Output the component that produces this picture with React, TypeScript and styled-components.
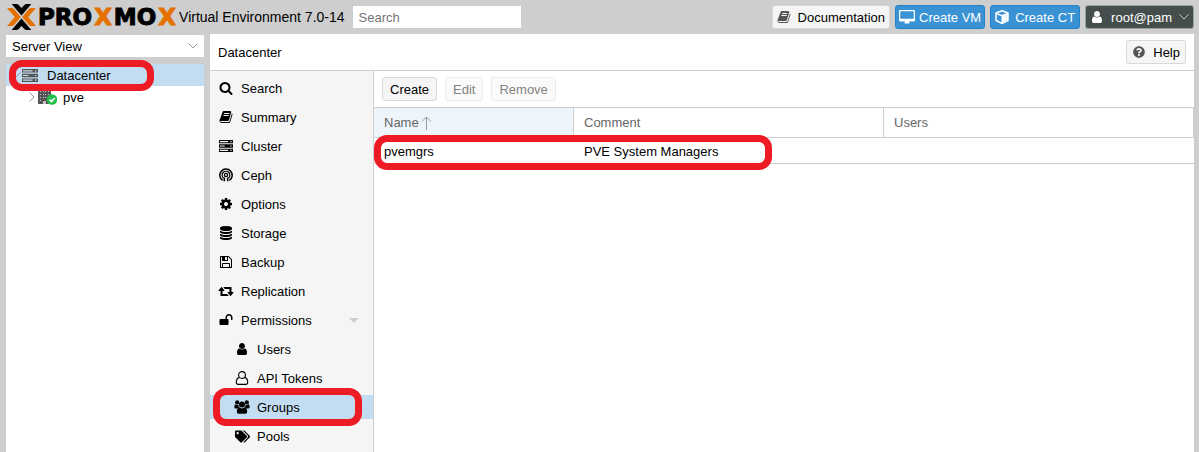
import React from "react";
import styled, { createGlobalStyle, css } from "styled-components";
import { FaTags, FaQuestionCircle } from "react-icons/fa";

const GlobalStyle = createGlobalStyle`
  *, *::before, *::after { box-sizing: border-box; }
  body {
    margin: 0;
    background: #cecece;
    color: #000;
    font: 13px/17px "Liberation Sans", Arial, sans-serif;
  }
  button, input, select { font: inherit; }
`;

const PATHS = {
  search:
    "M1216 832q0-185-131.5-316.5t-316.5-131.5-316.5 131.5-131.5 316.5 131.5 316.5 316.5 131.5 316.5-131.5 131.5-316.5zm512 832q0 52-38 90t-90 38q-54 0-90-38l-343-342q-179 124-399 124-143 0-273.5-55.5t-225-150-150-225-55.5-273.5 55.5-273.5 150-225 225-150 273.5-55.5 273.5 55.5 225 150 150 225 55.5 273.5q0 220-124 399l343 343q37 37 37 90z",
  book: "M1703 478q40 57 18 129l-275 906q-19 64-76.5 107.5t-122.5 43.5h-923q-77 0-148.5-53.5t-99.5-131.5q-24-67-2-127 0-4 3-27t4-37q1-8-3-21.5t-3-19.5q2-11 8-21t16.5-23.5 16.5-23.5q23-38 45-91.5t30-91.5q3-10 .5-30t-.5-28q3-11 17-28t17-23q21-36 42-92t25-90q1-9-2.5-32t.5-28q4-13 22-30.5t22-22.5q19-26 42.5-84.5t27.5-96.5q1-8-3-25.5t-2-26.5q2-8 9-18t18-23 17-21q8-12 16.5-30.5t15-35 16-36 19.5-32 26.5-23.5 36-11.5 47.5 5.5l-1 3q38-9 51-9h761q74 0 114 56t18 130l-274 906q-36 119-71.5 153.5t-128.5 34.5h-869q-27 0-38 15-11 16-1 43 24 70 144 70h923q29 0 56-15.5t35-41.5l300-987q7-22 5-57 38 15 59 43zm-1064 2q-4 13 2 22.5t20 9.5h608q13 0 25.5-9.5t16.5-22.5l21-64q4-13-2-22.5t-20-9.5h-608q-13 0-25.5 9.5t-16.5 22.5zm-83 256q-4 13 2 22.5t20 9.5h608q13 0 25.5-9.5t16.5-22.5l21-64q4-13-2-22.5t-20-9.5h-608q-13 0-25.5 9.5t-16.5 22.5z",
  cog: "M1152 896q0-106-75-181t-181-75-181 75-75 181 75 181 181 75 181-75 75-181zm512-109v222q0 12-8 23t-20 13l-185 28q-19 54-39 91 35 50 107 138 10 12 10 25t-9 23q-27 37-99 108t-94 71q-12 0-26-9l-138-108q-44 23-91 38-16 136-29 186-7 28-36 28h-222q-14 0-24.5-8.5t-11.5-21.5l-28-184q-49-16-90-37l-141 107q-10 9-25 9-14 0-25-11-126-114-165-168-7-10-7-23 0-12 8-23 15-21 51-66.5t54-70.5q-27-50-41-99l-183-27q-13-2-21-12.5t-8-23.5v-222q0-12 8-23t19-13l186-28q14-46 39-92-40-57-107-138-10-12-10-24 0-10 9-23 26-36 98.5-107.5t94.5-71.5q13 0 26 10l138 107q44-23 91-38 16-136 29-186 7-28 36-28h222q14 0 24.5 8.5t11.5 21.5l28 184q49 16 90 37l142-107q9-9 24-9 13 0 25 10 129 119 165 170 7 8 7 22 0 12-8 23-15 21-51 66.5t-54 70.5q26 50 41 98l183 28q13 2 21 12.5t8 23.5z",
  database:
    "M896 768q237 0 443-43t325-127v170q0 69-103 128t-280 93.5-385 34.5-385-34.5-280-93.5-103-128v-170q119 84 325 127t443 43zm0 768q237 0 443-43t325-127v170q0 69-103 128t-280 93.5-385 34.5-385-34.5-280-93.5-103-128v-170q119 84 325 127t443 43zm0-384q237 0 443-43t325-127v170q0 69-103 128t-280 93.5-385 34.5-385-34.5-280-93.5-103-128v-170q119 84 325 127t443 43zm0-1152q208 0 385 34.5t280 93.5 103 128v128q0 69-103 128t-280 93.5-385 34.5-385-34.5-280-93.5-103-128v-128q0-69 103-128t280-93.5 385-34.5z",
  floppy:
    "M512 1536h768v-384h-768v384zm896 0h128v-896q0-14-10-38.5t-20-34.5l-281-281q-10-10-34-20t-39-10v416q0 40-28 68t-68 28h-576q-40 0-68-28t-28-68v-416h-128v1280h128v-416q0-40 28-68t68-28h832q40 0 68 28t28 68v416zm-384-928v-320q0-13-9.5-22.5t-22.5-9.5h-192q-13 0-22.5 9.5t-9.5 22.5v320q0 13 9.5 22.5t22.5 9.5h192q13 0 22.5-9.5t9.5-22.5zm640 32v928q0 40-28 68t-68 28h-1344q-40 0-68-28t-28-68v-1344q0-40 28-68t68-28h928q40 0 88 20t76 48l280 280q28 28 48 76t20 88z",
  retweet:
    "M1280 1504q0 13-9.5 22.5t-22.5 9.5h-960q-8 0-13.5-2t-9-7-5.5-8-3-11.5-1-11.5v-600h-192q-26 0-45-19t-19-45q0-24 15-41l320-384q19-22 49-22t49 22l320 384q15 17 15 41 0 26-19 45t-45 19h-192v384h576q16 0 25 11l160 192q7 10 7 21zm640-416q0 24-15 41l-320 384q-20 23-49 23t-49-23l-320-384q-15-17-15-41 0-26 19-45t45-19h192v-384h-576q-16 0-25-12l-160-192q-7-9-7-20 0-13 9.5-22.5t22.5-9.5h960q8 0 13.5 2t9 7 5.5 8 3 11.5 1 11.5v600h192q26 0 45 19t19 45z",
  unlock:
    "M1728 576v256q0 26-19 45t-45 19h-64q-26 0-45-19t-19-45v-256q0-106-75-181t-181-75-181 75-75 181v192h96q40 0 68 28t28 68v576q0 40-28 68t-68 28h-960q-40 0-68-28t-28-68v-576q0-40 28-68t68-28h672v-192q0-185 131.5-316.5t316.5-131.5 316.5 131.5 131.5 316.5z",
  user: "M1536 1399q0 109-62.5 187t-150.5 78h-854q-88 0-150.5-78t-62.5-187q0-85 8.5-160.5t31.5-152 58.5-131 94-89 134.5-34.5q131 128 313 128t313-128q76 0 134.5 34.5t94 89 58.5 131 31.5 152 8.5 160.5zm-256-887q0 159-112.5 271.5t-271.5 112.5-271.5-112.5-112.5-271.5 112.5-271.5 271.5-112.5 271.5 112.5 112.5 271.5z",
};

const Glyph = ({ name, size = 14, wide }: { name: keyof typeof PATHS; size?: number; wide?: boolean }) => (
  <svg width={wide ? size + 2 : size} height={size} viewBox={wide ? "0 0 1920 1792" : "0 0 1792 1792"} fill="currentColor" aria-hidden="true">
    <path d={PATHS[name]} />
  </svg>
);

const ServerGlyph = ({ width = 14, height = 12 }: { width?: number; height?: number }) => (
  <svg width={width} height={height} viewBox="0 0 16 13" preserveAspectRatio="none" fill="currentColor" aria-hidden="true">
    <path fillRule="evenodd" d="M0 0h16v3.6H0zM1 1.2v1.2h9.500v-1.2zM13 1.2v1.2h1.4V1.2zM0 4.7h16v3.6H0zM1 5.900v1.2h5.500V5.900zM13 5.9v1.2h1.4V5.9zM0 9.4h16V13H0zM1 10.6v1.2h9.500v-1.2zM13 10.6v1.2h1.4v-1.2z" />
  </svg>
);

const CephGlyph = () => (
  <svg width="14" height="14" viewBox="0 0 14 14" fill="none" stroke="currentColor" aria-hidden="true">
    <path d="M3.6 12.4A6.2 6.2 0 1 1 10.4 12.4" strokeWidth="1.500" />
    <path d="M4.600 10.200A3.9 3.9 0 1 1 9.400 10.200" strokeWidth="1.200" />
    <path d="M5.300 13.200V9.500M8.700 13.200V9.500" strokeWidth="1.500" />
    <circle cx="7" cy="7" r="1.600" strokeWidth="1.300" />
  </svg>
);

const UserOutline = () => (
  <svg width="14" height="14" viewBox="0 0 14 14" fill="none" stroke="currentColor" strokeWidth="1.1" aria-hidden="true">
    <circle cx="7" cy="4" r="3.4" />
    <path d="M4.4 6.4C2 7 1.3 9 1.3 11.3c0 1.3.9 2.1 2 2.1h7.4c1.1 0 2-.8 2-2.1C12.700 9 12 7 9.600 6.400" />
  </svg>
);

const UsersGlyph = () => (
  <svg width="16" height="14" viewBox="0 0 16 14" fill="currentColor" aria-hidden="true">
    <circle cx="3.200" cy="2.400" r="2.100" />
    <circle cx="12.800" cy="2.400" r="2.100" />
    <circle cx="8" cy="4.500" r="3" />
    <path d="M1.300 4.300q1.800 1.200 3.200.5 0 1.700 1 2.600-1.500.1-2.300 1.100H1.800Q.300 8.500.300 7.200q0-2.600 1-2.900zM14.700 4.300q-1.800 1.200-3.200.5 0 1.700-1 2.600 1.500.1 2.300 1.100h1.400q1.500 0 1.500-1.300 0-2.600-1-2.900z" />
    <path d="M5.200 7.300q2.800 2.200 5.600 0 2.200.1 2.400 4.400 0 2-1.900 2H4.700q-1.900 0-1.900-2 .2-4.300 2.400-4.400z" />
  </svg>
);

const DesktopGlyph = () => (
  <svg width="16" height="14" viewBox="0 0 16 14" fill="currentColor" aria-hidden="true">
    <path fillRule="evenodd" d="M1.300 0h13.400Q16 0 16 1.300v8.900q0 1.300-1.300 1.300H10q0 .8.600 1.200.1.800-.6.800H6q-.700 0-.6-.8.600-.4.600-1.200H1.300Q0 11.500 0 10.200V1.300Q0 0 1.300 0zM1.300 1.300V8.700H14.700V1.300z" />
  </svg>
);

const CubeGlyph = () => (
  <svg width="14" height="14" viewBox="0 0 14 14" aria-hidden="true">
    <path d="M7 .8 13 3v7.500l-6 3-6-3V3z" fill="none" stroke="currentColor" strokeWidth="1.500" strokeLinejoin="round" />
    <path d="M1 3.300 7 5.700 13 3.300" fill="none" stroke="currentColor" strokeWidth="1.400" />
    <path d="M13.200 3.300 6.500 5.700V13.500L13.200 10.500zM11.800 5.300v4.300L8 11.400V6.700z" fill="currentColor" fillRule="evenodd" />
    <path d="M8 6.700 11.800 5.300V9.600L8 11.400z" fill="currentColor" />
  </svg>
);

const NodeGlyph = () => (
  <svg width="19" height="16" viewBox="0 0 19 16" aria-hidden="true">
    <path d="M0 0h13v15H0z" fill="#555" />
    <path d="M2 2h1v1H2zM5 2h1v1H5zM7 2h1v1H7zM10 2h1v1h-1zM2 5h1v1H2zM5 5h1v1H5zM7 5h1v1H7zM10 5h1v1h-1zM2 8h1v1H2zM5 8h1v1H5zM7 8h1v1H7zM2 11h1v1H2zM5 12h3v3H5z" fill="#c4c4c4" />
    <circle cx="14" cy="10.500" r="5.300" fill="#21bf4b" />
    <path d="m11.500 10.500 2 2 3.300-3.500" fill="none" stroke="#fff" strokeWidth="1.600" />
  </svg>
);

const Chevron = ({ dir }: { dir: "down" | "right" }) => (
  <svg width={dir === "down" ? 10 : 6} height={dir === "down" ? 6 : 10} viewBox={dir === "down" ? "0 0 10 6" : "0 0 6 10"} fill="none" stroke="currentColor" aria-hidden="true">
    <path d={dir === "down" ? "M.5.500 5 5 9.500.500" : "M.5.500 5 5 .5 9.500"} />
  </svg>
);

const LogoMark = () => (
  <svg width="29" height="26" viewBox="0 0 28 26" preserveAspectRatio="none" aria-hidden="true">
    <path d="M0 4h4.500q1.500 0 2.500 1.200L13.300 13 7 20.800Q6 22 4.500 22H0l7.500-9z" fill="#e57000" />
    <path d="M28 4h-4.500Q22 4 21 5.200L14.700 13l6.300 7.800q1 1.200 2.500 1.200H28l-7.500-9z" fill="#e57000" />
    <path d="M4.500 0H9q1.500 0 2.500 1.200L14 4l2.500-2.800Q17.500 0 19 0h4.500L14 11.500z" fill="#000" />
    <path d="M4.500 26H9q1.500 0 2.500-1.200L14 22l2.500 2.800Q17.500 26 19 26h4.500L14 14.500z" fill="#000" />
  </svg>
);

const Page = styled.div`
  display: flex;
  flex-direction: column;
  min-height: 100vh;
`;

const Header = styled.header`
  display: flex;
  align-items: center;
  height: 34px;
  padding: 0 5px 0 7px;
`;

const Brand = styled.a`
  display: flex;
  align-items: center;
  gap: 2px;
  color: #000;
  text-decoration: none;
`;

const Wordmark = styled.span<{ $accent?: boolean }>`
  font: bold 23px/24px "DejaVu Sans", sans-serif;
  -webkit-text-stroke: 1px currentColor;
  color: ${(p) => (p.$accent ? "#e57000" : "#000")};
`;

const Version = styled.span`
  margin-left: 3px;
  font-size: 14px;
  white-space: nowrap;
`;

const SearchBox = styled.input`
  width: 168px;
  height: 22px;
  margin-left: 8px;
  padding: 0 6px;
  border: 0;
  background: #fff;
  &::placeholder { color: #757575; }
`;

const HeaderActions = styled.div`
  display: flex;
  gap: 5px;
  margin-left: auto;
`;

const tones = {
  plain: css`background: #f5f5f5; border-color: #d8d8d8; color: #000;`,
  blue: css`background: #3892d4; border-color: #2482c8; color: #fff;`,
  dark: css`background: #464d4d; border-color: #93a5a0; color: #fff;`,
};

const Button = styled.button<{ $tone?: keyof typeof tones; $pad?: number; $gap?: number }>`
  display: inline-flex;
  align-items: center;
  justify-content: center;
  gap: ${(p) => p.$gap ?? 7}px;
  height: 24px;
  padding: 0 ${(p) => p.$pad ?? 7}px;
  border: 1px solid;
  border-radius: 3px;
  white-space: nowrap;
  ${(p) => tones[p.$tone ?? "plain"]}
  &:disabled { background: #fafafa; border-color: #ebebeb; color: #828282; }
`;

const IconTone = styled.span<{ $color?: string }>`
  display: inline-flex;
  justify-content: center;
  flex: none;
  min-width: 14px;
  color: ${(p) => p.$color ?? "inherit"};
`;

const MenuArrow = styled.span`
  display: inline-flex;
  color: #c8c8c8;
`;

const Workspace = styled.div`
  display: flex;
  flex: 1;
  gap: 6px;
  padding: 0 5px 0 6px;
`;

const Sidebar = styled.aside`
  display: flex;
  flex-direction: column;
  flex: none;
  gap: 7px;
  width: 198px;
  padding-top: 1px;
`;

const ViewPicker = styled.label`
  display: flex;
  align-items: center;
  height: 22px;
  padding-right: 6px;
  background: #fff;
  color: #999;
`;

const ViewSelect = styled.select`
  flex: 1;
  height: 22px;
  padding: 0 6px;
  border: 0;
  appearance: none;
  background: transparent;
  color: #000;
`;

const Tree = styled.nav`
  flex: 1;
  background: #fff;
`;

const TreeRow = styled.a<{ $depth: number; $selected?: boolean }>`
  position: relative;
  display: flex;
  align-items: center;
  height: 22px;
  padding-left: ${(p) => 9 + p.$depth * 14}px;
  background: ${(p) => (p.$selected ? "#c2ddf2" : "transparent")};
  color: #000;
  text-decoration: none;
`;

const Twisty = styled.span`
  display: inline-flex;
  justify-content: flex-end;
  width: 6px;
  color: #999;
  svg { flex: none; }
`;

const TreeIcon = styled.span<{ $gap: number }>`
  display: inline-flex;
  margin: 0 ${(p) => p.$gap}px 0 ${(p) => (p.$gap > 6 ? 1 : 3)}px;
  color: #555;
`;

const Highlight = styled.span<{ $x: number; $y: number; $w: number; $h: number }>`
  position: absolute;
  z-index: 2;
  left: ${(p) => p.$x}px;
  top: ${(p) => p.$y}px;
  width: ${(p) => p.$w}px;
  height: ${(p) => p.$h}px;
  border: 7px solid #ed1c24;
  border-radius: 13px;
  pointer-events: none;
`;

const Main = styled.main`
  display: flex;
  flex: 1;
  flex-direction: column;
  min-width: 0;
  background: #fff;
`;

const TitleBar = styled.div`
  display: flex;
  align-items: center;
  justify-content: space-between;
  height: 37px;
  padding: 0 8px;
  border-bottom: 1px solid #cecece;
`;

const Title = styled.h1`
  margin: 0;
  font-size: 13px;
  font-weight: normal;
`;

const Columns = styled.div`
  display: flex;
  flex: 1;
`;

const Menu = styled.nav`
  display: flex;
  flex: none;
  flex-direction: column;
  gap: 5px;
  width: 164px;
  padding: 5px 0 4px;
  border-right: 1px solid #cecece;
  background: #f5f5f5;
`;

const MenuItem = styled.a<{ $nested?: boolean; $selected?: boolean }>`
  position: relative;
  display: flex;
  align-items: center;
  gap: 7px;
  height: 24px;
  padding: 0 14px 0 ${(p) => (p.$nested ? 24 : 8)}px;
  background: ${(p) => (p.$selected ? "#c2ddf2" : "transparent")};
  color: #000;
  text-decoration: none;
`;

const MenuIcon = styled.span`
  display: inline-flex;
  justify-content: center;
  width: 16px;
`;

const Caret = styled.span`
  margin-left: auto;
  border: 5px solid transparent;
  border-top-color: #cecece;
  border-bottom: 0;
`;

const Content = styled.section`
  flex: 1;
  min-width: 0;
`;

const Toolbar = styled.div`
  display: flex;
  align-items: center;
  gap: 8px;
  height: 37px;
  padding: 0 8px;
  border-bottom: 1px solid #cecece;
`;

const GridWrap = styled.div`
  position: relative;
`;

const Grid = styled.table`
  width: 100%;
  border-collapse: separate;
  border-spacing: 0;
  table-layout: fixed;
`;

const HeadCell = styled.th<{ $width?: number; $sorted?: boolean }>`
  width: ${(p) => (p.$width ? `${p.$width}px` : "auto")};
  height: 30px;
  padding: 0 10px;
  border: solid #cecece;
  border-width: 0 1px 1px 0;
  background: ${(p) => (p.$sorted ? "#edf5fb" : "#fff")};
  color: #666;
  font-weight: normal;
  text-align: left;
`;

const HeadLabel = styled.span`
  display: flex;
  align-items: center;
  gap: 2px;
`;

const Cell = styled.td`
  height: 26px;
  padding: 2px 10px 0;
  border-bottom: 1px solid #cecece;
`;

const menu = [
  { label: "Search", icon: <Glyph name="search" /> },
  { label: "Summary", icon: <Glyph name="book" /> },
  { label: "Cluster", icon: <ServerGlyph /> },
  { label: "Ceph", icon: <CephGlyph /> },
  { label: "Options", icon: <Glyph name="cog" /> },
  { label: "Storage", icon: <Glyph name="database" /> },
  { label: "Backup", icon: <Glyph name="floppy" /> },
  { label: "Replication", icon: <Glyph name="retweet" wide /> },
  { label: "Permissions", icon: <Glyph name="unlock" />, expandable: true },
  { label: "Users", icon: <Glyph name="user" />, nested: true },
  { label: "API Tokens", icon: <UserOutline />, nested: true },
  { label: "Groups", icon: <UsersGlyph />, nested: true, selected: true },
  { label: "Pools", icon: <FaTags size={15} />, nested: true },
];

const letters = [
  { text: "PRO" },
  { text: "X", accent: true },
  { text: "MO" },
  { text: "X", accent: true },
];

export default function App() {
  return (
    <Page>
      <GlobalStyle />
      <Header>
        <Brand href="#home">
          <LogoMark />
          {letters.map((part, i) => (
            <Wordmark key={i} $accent={part.accent}>{part.text}</Wordmark>
          ))}
        </Brand>
        <Version>Virtual Environment 7.0-14</Version>
        <SearchBox type="text" placeholder="Search" aria-label="Search" />
        <HeaderActions>
          <Button $pad={4}><IconTone $color="#555"><Glyph name="book" /></IconTone>Documentation</Button>
          <Button $tone="blue" $pad={3} $gap={4}><IconTone><DesktopGlyph /></IconTone>Create VM</Button>
          <Button $tone="blue" $pad={4} $gap={6}><IconTone><CubeGlyph /></IconTone>Create CT</Button>
          <Button $tone="dark" $pad={4}>
            <IconTone><Glyph name="user" /></IconTone>root@pam
            <MenuArrow><Chevron dir="down" /></MenuArrow>
          </Button>
        </HeaderActions>
      </Header>
      <Workspace>
        <Sidebar>
          <ViewPicker>
            <ViewSelect aria-label="View" defaultValue="server">
              <option value="server">Server View</option>
              <option value="folder">Folder View</option>
            </ViewSelect>
            <Chevron dir="down" />
          </ViewPicker>
          <Tree aria-label="Resources">
            <TreeRow href="#datacenter" $depth={0} $selected>
              <Twisty><Chevron dir="down" /></Twisty>
              <TreeIcon $gap={9}><ServerGlyph width={16} height={13} /></TreeIcon>
              Datacenter
              <Highlight $x={3} $y={-4} $w={145} $h={31} />
            </TreeRow>
            <TreeRow href="#pve" $depth={1}>
              <Twisty><Chevron dir="right" /></Twisty>
              <TreeIcon $gap={6}><NodeGlyph /></TreeIcon>
              pve
            </TreeRow>
          </Tree>
        </Sidebar>
        <Main>
          <TitleBar>
            <Title>Datacenter</Title>
            <Button $pad={5}><IconTone $color="#555"><FaQuestionCircle size={12} /></IconTone>Help</Button>
          </TitleBar>
          <Columns>
            <Menu aria-label="Datacenter">
              {menu.map((item) => (
                <MenuItem key={item.label} href={`#${item.label}`} $nested={item.nested} $selected={item.selected}>
                  <MenuIcon>{item.icon}</MenuIcon>
                  {item.label}
                  {item.expandable && <Caret />}
                  {item.selected && <Highlight $x={3} $y={-7} $w={149} $h={38} />}
                </MenuItem>
              ))}
            </Menu>
            <Content>
              <Toolbar>
                <Button>Create</Button>
                <Button disabled>Edit</Button>
                <Button disabled>Remove</Button>
              </Toolbar>
              <GridWrap>
                <Grid>
                  <thead>
                    <tr>
                      <HeadCell $width={200} $sorted aria-sort="ascending">
                        <HeadLabel>
                          Name
                          <svg width="11" height="14" viewBox="0 0 11 14" fill="none" stroke="#999" aria-hidden="true">
                            <path d="M5.500 14V1M1 5.500 5.500 1 10 5.500" />
                          </svg>
                        </HeadLabel>
                      </HeadCell>
                      <HeadCell $width={310}>Comment</HeadCell>
                      <HeadCell>Users</HeadCell>
                    </tr>
                  </thead>
                  <tbody>
                    <tr>
                      <Cell>pvemgrs</Cell>
                      <Cell>PVE System Managers</Cell>
                      <Cell />
                    </tr>
                  </tbody>
                </Grid>
                <Highlight $x={0} $y={27} $w={398} $h={35} />
              </GridWrap>
            </Content>
          </Columns>
        </Main>
      </Workspace>
    </Page>
  );
}
